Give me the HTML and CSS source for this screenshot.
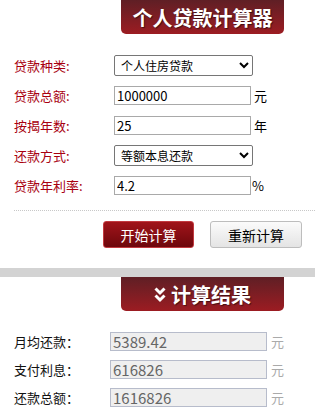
FILE: index.html
```html
<!DOCTYPE html>
<html lang="zh-CN">
<head>
    <meta charset="UTF-8">
    <meta name="viewport" content="width=device-width, initial-scale=1.0">
    <title>个人贷款计算器</title>
    <link rel="stylesheet" href="styles.css">
</head>
<body>
    <div class="calc">
        <div class="tab">个人贷款计算器</div>
        <div class="form">
            <div class="row">
                <label class="label" for="type">贷款种类:</label>
                <select id="type" class="sel">
                    <option>个人住房贷款</option>
                </select>
            </div>
            <div class="row">
                <label class="label" for="amount">贷款总额:</label>
                <input id="amount" class="txt" type="text" value="1000000">
                <span class="unit">元</span>
            </div>
            <div class="row">
                <label class="label" for="years">按揭年数:</label>
                <input id="years" class="txt" type="text" value="25">
                <span class="unit">年</span>
            </div>
            <div class="row">
                <label class="label" for="way">还款方式:</label>
                <select id="way" class="sel">
                    <option>等额本息还款</option>
                </select>
            </div>
            <div class="row">
                <label class="label" for="rate">贷款年利率:</label>
                <input id="rate" class="txt" type="text" value="4.2">
                <span class="unit pct">%</span>
            </div>
        </div>
        <div class="actions">
            <button class="btn btn-red">开始计算</button>
            <button class="btn btn-gray">重新计算</button>
        </div>
    </div>

    <div class="divider"></div>

    <div class="result">
        <div class="tab">
            <svg class="chev" width="12" height="17" viewBox="0 0 12 17">
                <polyline points="1.5,2.5 6,7 10.5,2.5" fill="none" stroke="#fff" stroke-width="3"/>
                <polyline points="1.5,9.5 6,14 10.5,9.5" fill="none" stroke="#fff" stroke-width="3"/>
            </svg>
            计算结果
        </div>
        <div class="out">
            <div class="orow">
                <span class="olabel">月均还款：</span>
                <input class="otxt" type="text" value="5389.42" readonly>
                <span class="ounit">元</span>
            </div>
            <div class="orow">
                <span class="olabel">支付利息：</span>
                <input class="otxt" type="text" value="616826" readonly>
                <span class="ounit">元</span>
            </div>
            <div class="orow">
                <span class="olabel">还款总额：</span>
                <input class="otxt" type="text" value="1616826" readonly>
                <span class="ounit">元</span>
            </div>
        </div>
    </div>
</body>
</html>
```

FILE: styles.css
```css
body {
    margin: 0;
    padding: 0;
    width: 315px;
    background: #fff;
    font-family: "Noto Sans CJK SC", "Noto Sans", sans-serif;
    font-size: 13px;
    color: #000;
    overflow: hidden;
}
.tab {
    margin-left: 121px;
    width: 163px;
    height: 34px;
    border-radius: 0 0 5px 5px;
    background: linear-gradient(to bottom, #5f1f25, #9c1c22);
    color: #fff;
    font-size: 20px;
    font-weight: bold;
    display: flex;
    align-items: center;
    justify-content: center;
    text-shadow: 1px 1px 1px rgba(0,0,0,0.5);
}
.form {
    margin-top: 16px;
    padding-left: 14px;
}
.row {
    height: 30px;
    display: flex;
    align-items: center;
}
.label {
    width: 100px;
    color: #a8000f;
    font-size: 13px;
}
.sel {
    width: 139px;
    height: 21px;
    font-family: "Noto Sans CJK SC", sans-serif;
    font-size: 12px;
    padding: 0 2px;
    border: 1px solid #767676;
    border-radius: 2px;
    background: #fff;
    color: #000;
}
.txt {
    width: 137px;
    height: 19px;
    box-sizing: border-box;
    border: 1px solid #a9a9a9;
    padding: 0 2px;
    font-family: "Noto Sans CJK SC", sans-serif;
    font-size: 13px;
    color: #000;
}
.unit {
    margin-left: 3px;
    font-size: 13px;
}
.unit.pct {
    margin-left: 1px;
}
.actions {
    margin-top: 10px;
    margin-left: 14px;
    border-top: 1px dotted #c8c8c8;
    padding: 10px 13px 0 0;
    display: flex;
    justify-content: flex-end;
    gap: 16px;
}
.btn {
    height: 27px;
    font-family: "Noto Sans CJK SC", sans-serif;
    font-size: 14px;
    border-radius: 3px;
    padding: 0;
    cursor: pointer;
}
.btn-red {
    width: 91px;
    color: #fff;
    background: linear-gradient(to bottom, #a0141a, #6e070c);
    border: 1px solid #c23a40;
}
.btn-gray {
    width: 92px;
    color: #000;
    background: linear-gradient(to bottom, #fbfbfb, #e4e4e4);
    border: 1px solid #bdbdbd;
}
.divider {
    margin-top: 20px;
    height: 9px;
    background: #d3d3d3;
}
.chev {
    margin-right: 5px;
}
.out {
    margin-top: 16px;
    padding-left: 14px;
}
.orow {
    height: 28px;
    display: flex;
    align-items: center;
}
.olabel {
    width: 96px;
    font-size: 13px;
    color: #111;
}
.otxt {
    width: 157px;
    height: 19px;
    box-sizing: border-box;
    background: #efefef;
    border: 1px solid #b7bccb;
    padding: 0 2px;
    font-family: "Noto Sans CJK SC", sans-serif;
    font-size: 15px;
    line-height: 17px;
    color: #666;
}
.ounit {
    margin-left: 4px;
    color: #aaa;
    font-size: 13px;
}
```
